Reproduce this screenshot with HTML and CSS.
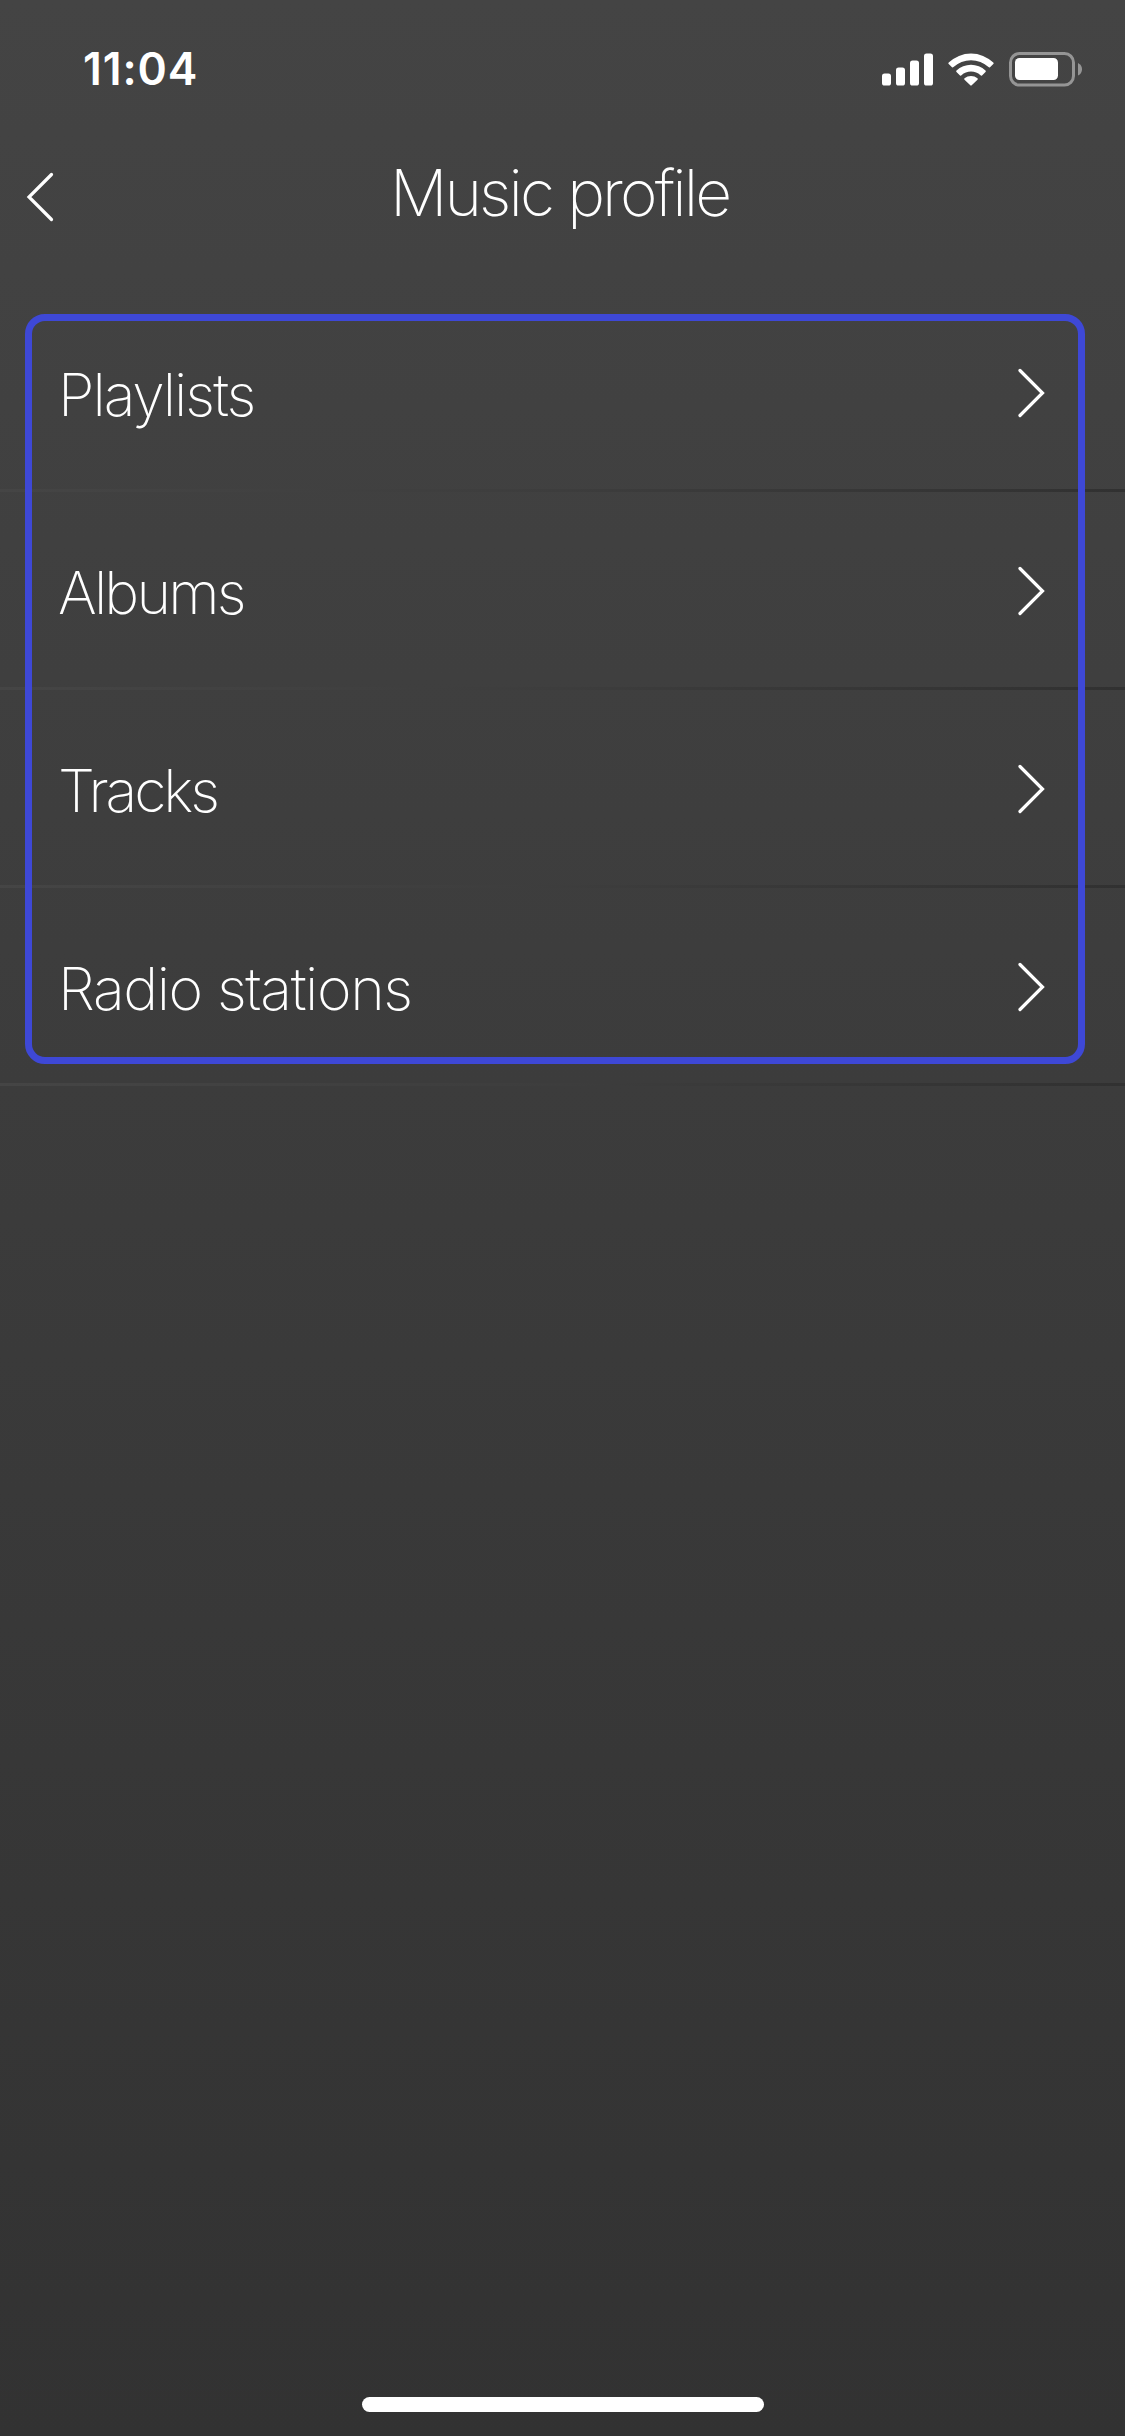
FILE: index.html
```html
<!DOCTYPE html>
<html lang="en">
<head>
<meta charset="utf-8">
<title>Music profile</title>
<link rel="stylesheet" href="styles.css">
</head>
<body>
<div class="screen">
  <div class="status">
    <span class="time">11:04</span>
    <svg class="status-icons" width="202" height="36" viewBox="0 0 202 36" fill="#fff">
      <rect x="0" y="21.500" width="9" height="12" rx="2.600"/>
      <rect x="14" y="15.500" width="9" height="18" rx="2.600"/>
      <rect x="28" y="8.500" width="9" height="25" rx="2.600"/>
      <rect x="42" y="1.500" width="9" height="32" rx="2.600"/>
      <path d="M66.700 10.600 A32 32 0 0 1 111.300 10.600 Q112 11.400 111.300 12.100 L108 15.200 Q107.300 15.800 106.500 15.100 A25.500 25.500 0 0 0 71.500 15.100 Q70.700 15.800 70 15.200 L66.700 12.100 Q66 11.400 66.700 10.600Z"/>
      <path d="M74.500 18.500 A21 21 0 0 1 103.500 18.500 Q104.300 19.300 103.500 20 L100 23.400 Q99.300 24 98.500 23.300 A14 14 0 0 0 79.500 23.300 Q78.700 24 78 23.400 L74.500 20 Q73.700 19.300 74.500 18.500Z"/>
      <path d="M82.500 26.200 A10.500 10.500 0 0 1 95.500 26.200 Q96.200 27 95.500 27.700 L89.700 33.300 Q89 34 88.300 33.300 L82.500 27.700 Q81.800 27 82.500 26.200Z"/>
      <rect x="128.500" y="1.500" width="63" height="31.500" rx="9" fill="none" stroke="#959595" stroke-width="3"/>
      <rect x="133" y="6" width="43" height="22" rx="4.500"/>
      <path d="M196 11 Q200 13 200 17.200 Q200 21.500 196 23.500Z" fill="#959595"/>
    </svg>
  </div>
  <header class="header">
    <svg class="back" width="28" height="50" viewBox="0 0 28 50"><path d="M25.500 2.500 3 25 25.500 47.500"/></svg>
    <h1 class="title">Music profile</h1>
  </header>
  <main class="list">
    <div class="row"><span class="label playlists">Playlists</span><svg class="chevron" width="28" height="50" viewBox="0 0 28 50"><path d="M2 2.500 24.500 25 2 47.500"/></svg></div>
    <div class="row"><span class="label albums">Albums</span><svg class="chevron" width="28" height="50" viewBox="0 0 28 50"><path d="M2 2.500 24.500 25 2 47.500"/></svg></div>
    <div class="row"><span class="label tracks">Tracks</span><svg class="chevron" width="28" height="50" viewBox="0 0 28 50"><path d="M2 2.500 24.500 25 2 47.500"/></svg></div>
    <div class="row"><span class="label radio">Radio stations</span><svg class="chevron" width="28" height="50" viewBox="0 0 28 50"><path d="M2 2.500 24.500 25 2 47.500"/></svg></div>
    <div class="highlight"></div>
  </main>
  <div class="home-indicator"></div>
</div>
</body>
</html>
```
FILE: styles.css
```css
* { box-sizing: border-box; }
body { margin: 0; }
.screen {
  display: flex;
  flex-direction: column;
  width: 1125px;
  height: 2436px;
  padding-bottom: 24px;
  background: linear-gradient(#444, #323232);
  color: #fff;
  font-family: Inter, "Liberation Sans", sans-serif;
}
.status {
  display: flex;
  justify-content: space-between;
  align-items: flex-start;
  height: 138px;
  padding: 52px 41px 0 83px;
}
.time {
  margin-top: -10px;
  font-size: 44.5px;
  line-height: 54px;
  font-weight: 600;
  letter-spacing: 0.9px;
}
.header {
  display: grid;
  grid-template-columns: 28px 1fr 28px;
  align-items: center;
  height: 118px;
  padding: 0 26px;
}
.title {
  margin: 0;
  padding: 0 6px 8px 0;
  font-size: 64px;
  line-height: 80px;
  font-weight: 200;
  letter-spacing: -2.9px;
  text-align: center;
}
.back, .chevron { fill: none; stroke: #fff; stroke-width: 3.2; stroke-linecap: round; }
.list { position: relative; padding-top: 38px; }
.row {
  display: flex;
  justify-content: space-between;
  align-items: center;
  height: 198px;
  padding: 3px 79px 0 58px;
  background: linear-gradient(90deg, #454545, #3d3d3d 50%, #313131) bottom / 100% 3px no-repeat;
}
.label { font-size: 59px; line-height: 72px; font-weight: 200; }
.playlists { letter-spacing: -2px; }
.albums { letter-spacing: -2.8px; }
.tracks { letter-spacing: -3.1px; }
.radio { letter-spacing: -1.4px; }
.chevron { margin-bottom: 4px; }
.highlight {
  position: absolute;
  top: 58px;
  left: 25px;
  width: 1060px;
  height: 750px;
  border: 7px solid #3e48d6;
  border-radius: 20px;
}
.home-indicator {
  width: 402px;
  height: 15px;
  margin: auto auto 0 362px;
  border-radius: 8px;
  background: #fff;
}
```
